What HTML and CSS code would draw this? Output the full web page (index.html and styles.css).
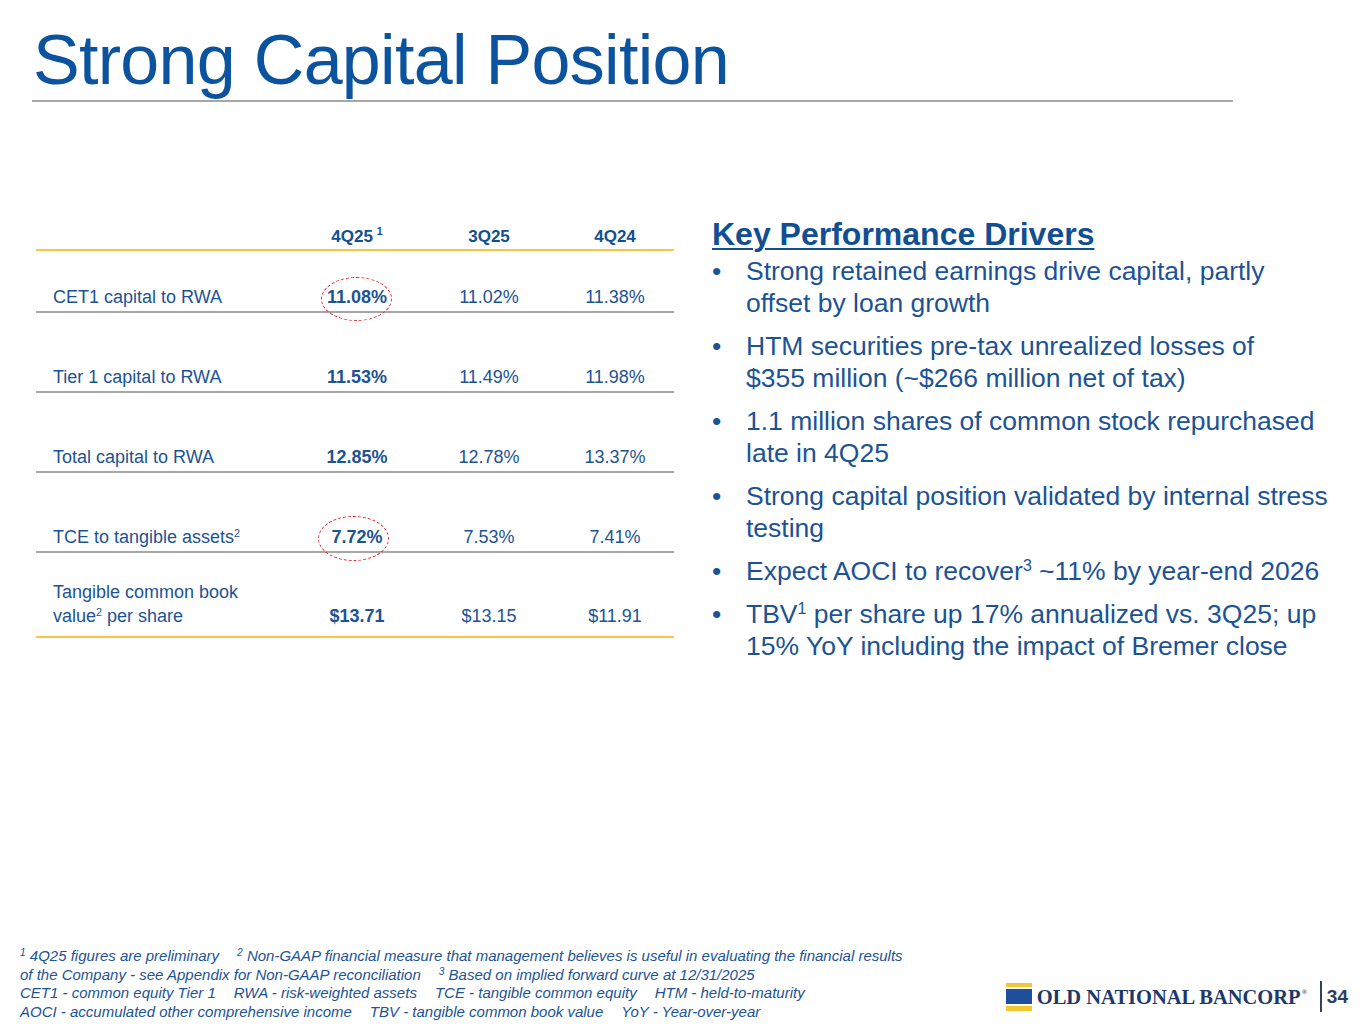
FILE: index.html
```html
<!DOCTYPE html>
<html lang="en">
<head>
<meta charset="utf-8">
<title>Strong Capital Position</title>
<link rel="stylesheet" href="styles.css">
</head>
<body>
<div class="slide">
  <h1 class="title">Strong Capital Position</h1>
  <div class="rule"></div>

  <div class="content">
    <div class="table">
      <div class="row head">
        <div></div>
        <div class="num">4Q25<sup class="hsup">1</sup></div>
        <div class="num">3Q25</div>
        <div class="num">4Q24</div>
      </div>
      <div class="row first">
        <div class="label">CET1 capital to RWA</div>
        <div class="num bold"><span class="circled">11.08%</span></div>
        <div class="num">11.02%</div>
        <div class="num">11.38%</div>
      </div>
      <div class="row">
        <div class="label">Tier 1 capital to RWA</div>
        <div class="num bold">11.53%</div>
        <div class="num">11.49%</div>
        <div class="num">11.98%</div>
      </div>
      <div class="row">
        <div class="label">Total capital to RWA</div>
        <div class="num bold">12.85%</div>
        <div class="num">12.78%</div>
        <div class="num">13.37%</div>
      </div>
      <div class="row">
        <div class="label">TCE to tangible assets<sup>2</sup></div>
        <div class="num bold"><span class="circled c2">7.72%</span></div>
        <div class="num">7.53%</div>
        <div class="num">7.41%</div>
      </div>
      <div class="row last">
        <div class="label">Tangible common book<br>value<sup>2</sup> per share</div>
        <div class="num bold">$13.71</div>
        <div class="num">$13.15</div>
        <div class="num">$11.91</div>
      </div>
    </div>

    <div class="drivers">
      <h2 class="drivers-title">Key Performance Drivers</h2>
      <ul class="bullets">
        <li><span class="dot">•</span><span>Strong retained earnings drive capital, partly<br>offset by loan growth</span></li>
        <li><span class="dot">•</span><span>HTM securities pre-tax unrealized losses of<br>$355 million (~$266 million net of tax)</span></li>
        <li><span class="dot">•</span><span>1.1 million shares of common stock repurchased<br>late in 4Q25</span></li>
        <li><span class="dot">•</span><span>Strong capital position validated by internal stress<br>testing</span></li>
        <li><span class="dot">•</span><span>Expect AOCI to recover<sup>3</sup> ~11% by year-end 2026</span></li>
        <li><span class="dot">•</span><span>TBV<sup>1</sup> per share up 17% annualized vs. 3Q25; up<br>15% YoY including the impact of Bremer close</span></li>
      </ul>
    </div>
  </div>

  <div class="footer">
    <div class="footnotes">
      <sup>1</sup> 4Q25 figures are preliminary<span class="sp"></span><sup>2</sup> Non-GAAP financial measure that management believes is useful in evaluating the financial results<br>
      of the Company - see Appendix for Non-GAAP reconciliation<span class="sp"></span><sup>3</sup> Based on implied forward curve at 12/31/2025<br>
      CET1 - common equity Tier 1<span class="sp"></span>RWA - risk-weighted assets<span class="sp"></span>TCE - tangible common equity<span class="sp"></span>HTM - held-to-maturity<br>
      AOCI - accumulated other comprehensive income<span class="sp"></span>TBV - tangible common book value<span class="sp"></span>YoY - Year-over-year
    </div>
    <div class="brand">
      <svg class="flag" width="26" height="28" viewBox="0 0 26 28" aria-hidden="true">
        <rect x="0" y="0" width="26" height="4" fill="#f5c634"/>
        <rect x="0" y="6" width="26" height="15" fill="#1e4f9a"/>
        <rect x="0" y="23" width="26" height="5" fill="#f5c634"/>
      </svg>
      <span class="brand-name">OLD NATIONAL BANCORP<sup>®</sup></span>
      <span class="sep"></span>
      <span class="page">34</span>
    </div>
  </div>
</div>
</body>
</html>
```

FILE: styles.css
```css
html, body {
  margin: 0;
  padding: 0;
  background: #ffffff;
}

.slide {
  width: 1365px;
  height: 1024px;
  display: flex;
  flex-direction: column;
  font-family: "Liberation Sans", Arial, sans-serif;
  color: #1c5394;
  overflow: hidden;
}

.title {
  margin: 20px 0 0 0;
  padding-left: 33px;
  height: 80px;
  font-size: 70px;
  line-height: 80px;
  font-weight: normal;
  letter-spacing: -0.7px;
  color: #0b539e;
}

.rule {
  margin-left: 32px;
  width: 1201px;
  height: 2px;
  background: #a7a7a7;
}

.content {
  display: flex;
  align-items: flex-start;
  margin-top: 118px;
  padding-left: 36px;
}

/* ---------- table ---------- */
.table {
  width: 638px;
  font-size: 18px;
  color: #1c5394;
}

.row {
  display: grid;
  grid-template-columns: 256px 130px 134px 118px;
  align-items: end;
  box-sizing: border-box;
  height: 80px;
  padding-bottom: 3px;
  line-height: 22px;
  border-bottom: 2px solid #a6a6a6;
}

.row.head {
  height: 31px;
  padding-bottom: 2px;
  font-size: 17px;
  line-height: 20px;
  font-weight: bold;
  color: #114f92;
  border-bottom-color: #f6c744;
}

.row.first {
  height: 62px;
}

.row.last {
  height: 85px;
  line-height: 24px;
  padding-bottom: 8px;
  border-bottom-color: #f6c744;
}

.label {
  padding-left: 17px;
}

.num {
  text-align: center;
}

.bold {
  font-weight: bold;
}

sup {
  font-size: 0.6em;
  line-height: 0;
  vertical-align: 0.55em;
}

.hsup {
  margin-left: 4px;
  font-size: 0.62em;
  vertical-align: 0.7em;
}

.circled {
  position: relative;
  display: inline-block;
}

.circled::after {
  content: "";
  position: absolute;
  left: -6px;
  right: -5px;
  top: -9px;
  bottom: -13px;
  border: 1.5px dashed #e0252e;
  border-radius: 50%;
}

.circled.c2::after {
  left: -13px;
  right: -6px;
  top: -10px;
}

/* ---------- drivers ---------- */
.drivers {
  margin-left: 38px;
  margin-top: -4px;
  color: #1c5394;
}

.drivers-title {
  margin: 0;
  font-size: 32px;
  line-height: 36px;
  font-weight: bold;
  text-decoration: underline;
  text-decoration-thickness: 2px;
  text-underline-offset: 3px;
  color: #114f92;
}

.bullets {
  list-style: none;
  margin: 3px 0 0 0;
  padding: 0;
  font-size: 26.5px;
  line-height: 32px;
  white-space: nowrap;
}

.bullets li {
  display: flex;
  margin-bottom: 11px;
}

.dot {
  flex: 0 0 34px;
}

/* ---------- footer ---------- */
.footer {
  margin-top: auto;
  display: flex;
  justify-content: space-between;
  align-items: flex-end;
}

.footnotes {
  padding-left: 20px;
  margin-bottom: 3px;
  font-size: 15px;
  line-height: 18.5px;
  font-style: italic;
  color: #1c5394;
  white-space: nowrap;
}

.footnotes sup {
  font-size: 0.68em;
  vertical-align: 0.5em;
}

.sp {
  display: inline-block;
  width: 18px;
}

.brand {
  display: flex;
  align-items: center;
  margin-right: 17px;
  margin-bottom: 12px;
}

.flag {
  display: block;
}

.brand-name {
  margin-left: 5px;
  font-family: "Liberation Serif", "Times New Roman", serif;
  font-weight: bold;
  font-size: 20.5px;
  line-height: 24px;
  color: #1d3869;
}

.brand-name sup {
  font-size: 7px;
  vertical-align: 10px;
  margin-left: 1px;
}

.sep {
  width: 2px;
  height: 31px;
  margin-left: 13px;
  background: #35405a;
}

.page {
  margin-left: 5px;
  font-size: 19px;
  font-weight: bold;
  color: #2f3d5b;
}
```
